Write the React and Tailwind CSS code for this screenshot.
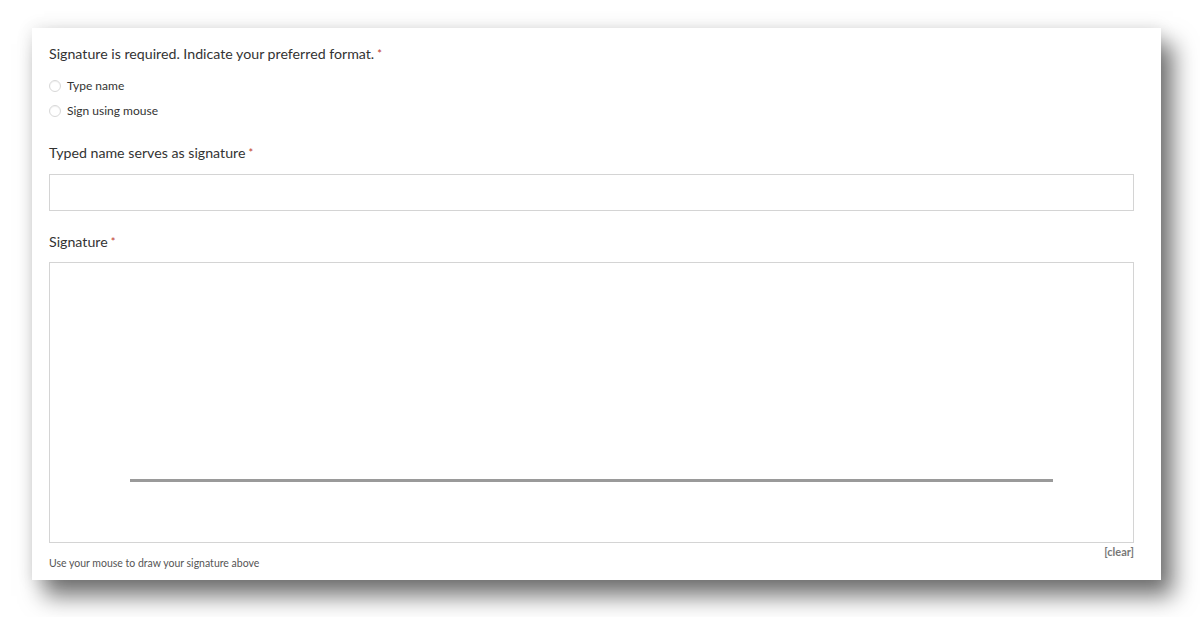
import React from "react";

const Req = () => <span className="text-[#c0392b] text-[11px] align-top ml-[3px]">*</span>;

const Radio = ({ label }) => (
  <label className="flex items-center gap-[6px] h-[25px] text-[12px] text-[#333]">
    <span className="w-[12px] h-[12px] rounded-full border border-[#d8d8d8] bg-white shadow-[inset_0_1px_1px_rgba(0,0,0,0.06)]" />
    {label}
  </label>
);

export default function App() {
  return (
    <div className="w-[1200px] h-[617px] bg-white pt-[28px] pl-[32px] font-['Lato','Liberation_Sans',sans-serif]">
      <div className="w-[1129px] h-[552px] bg-white shadow-[12px_16px_22px_rgba(0,0,0,0.55),0_0_16px_rgba(0,0,0,0.1)] pl-[17px] pr-[27px] pt-[16px]">
        <div className="text-[14.2px] text-[#333] leading-[20px]">
          Signature is required. Indicate your preferred format.<Req />
        </div>
        <div className="mt-[9px] flex flex-col">
          <Radio label="Type name" />
          <Radio label="Sign using mouse" />
        </div>
        <div className="mt-[20px] text-[14.2px] text-[#333] leading-[20px]">
          Typed name serves as signature<Req />
        </div>
        <div className="mt-[11px] h-[37px] border border-[#d4d4d4] bg-white" />
        <div className="mt-[21px] text-[14.2px] text-[#333] leading-[20px]">
          Signature<Req />
        </div>
        <div className="mt-[10px] h-[281px] border border-[#d4d4d4] bg-white flex items-end justify-center pb-[60px]">
          <div className="w-[923px] h-[3px] bg-[#9a9a9a]" />
        </div>
        <div className="flex justify-end text-[11px] font-bold text-[#777] leading-[16px] mt-[1px]">[clear]</div>
        <div className="text-[10.5px] text-[#555] leading-[14px] -mt-[4px]">Use your mouse to draw your signature above</div>
      </div>
    </div>
  );
}
